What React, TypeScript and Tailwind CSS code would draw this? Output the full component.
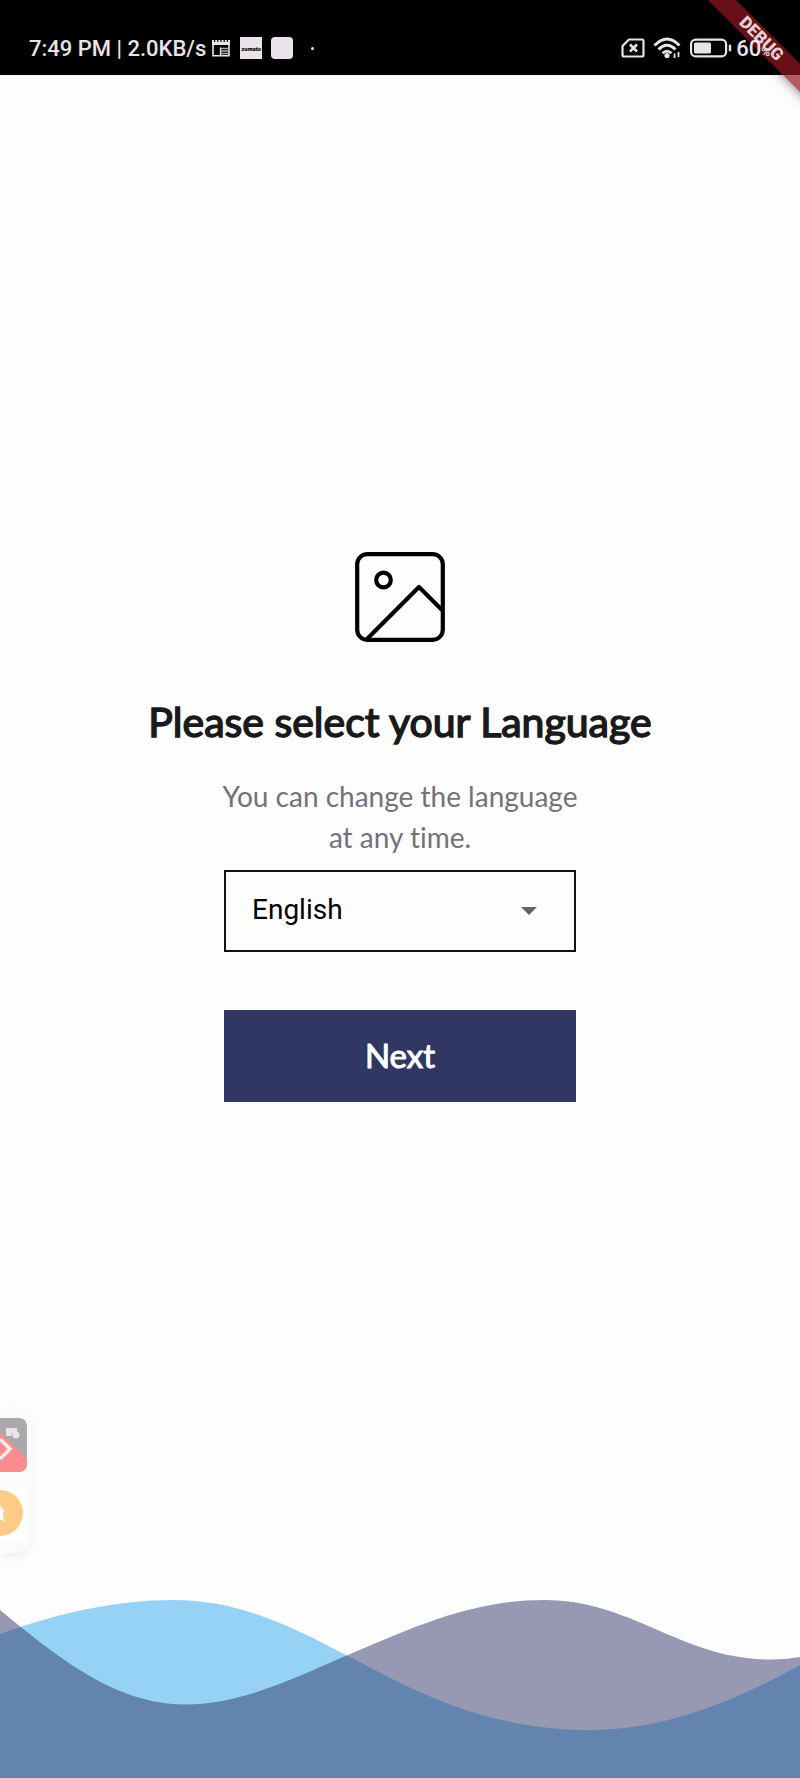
import React, { useState } from "react";

function StatusBar() {
  return (
    <header className="flex h-[75px] items-center justify-between bg-black pt-[21px] pl-[29px] pr-[30px] font-[Roboto,sans-serif] text-[22px] font-medium text-[#e9e3ea]">
      <div className="flex items-center">
        <span className="whitespace-nowrap">7:49 PM | 2.0KB/s</span>
        <svg className="ml-[6px]" width="18" height="17" viewBox="0 0 18 17" fill="none" stroke="currentColor" aria-hidden="true">
          <path d="M1 2V15.800H17V2" strokeWidth="1.6" />
          <path d="M0 1H18" strokeWidth="2" strokeDasharray="2 1.200" />
          <path d="M0 3.500H18" strokeWidth="3" />
          <path d="M8.500 7.500V15.500" strokeWidth="1.3" />
          <path d="M9 8.500H16M9 11H16M9 13.500H16" strokeWidth="1.5" strokeOpacity="0.75" />
        </svg>
        <span className="ml-[10px] flex h-[22px] w-[22px] items-center justify-center bg-[#e9e3ea] text-[6px] font-black italic text-black">zomato</span>
        <span className="ml-[9px] h-[22px] w-[22px] rounded bg-[#e9e3ea]" />
        <span className="ml-[18px] h-[3px] w-[3px] rounded-full bg-[#e9e3ea]" />
      </div>
      <div className="relative z-10 flex items-center">
        <svg width="24" height="20" viewBox="0 0 24 20" fill="none" stroke="currentColor" strokeWidth="2.2" strokeLinejoin="round" aria-hidden="true">
          <path d="M8 1.500H21Q22.500 1.500 22.500 3V17Q22.500 18.500 21 18.500H3Q1.500 18.500 1.500 17V8Z" />
          <path d="M9 6.500L16 13.500M16 6.500L9 13.500" strokeWidth="2.6" />
        </svg>
        <svg className="ml-[8px]" width="28" height="22" viewBox="0 0 28 22" fill="none" stroke="currentColor" strokeWidth="2.8" aria-hidden="true">
          <path d="M1.500 8.500Q14 -4.500 26.500 8.500M5.500 12.500Q14 4 22.500 12.500M9.500 16.200Q14 12 18.500 16.200" />
          <circle cx="14" cy="18.500" r="2.600" fill="currentColor" stroke="none" />
          <path d="M21.500 16.500V21M25.500 15V20" strokeWidth="1.8" />
        </svg>
        <svg className="ml-[9px]" width="42" height="20" viewBox="0 0 42 20" fill="none" aria-hidden="true">
          <rect x="1.100" y="1.600" width="35" height="16.800" rx="4.500" stroke="currentColor" strokeWidth="2.2" />
          <rect x="4" y="4.500" width="17" height="11" rx="1.500" fill="currentColor" />
          <path d="M40 7.800V12.200" stroke="currentColor" strokeWidth="2.4" strokeLinecap="round" />
        </svg>
        <span className="ml-[4px]">60<span className="text-[12px]">%</span></span>
      </div>
    </header>
  );
}

function DebugRibbon() {
  return (
    <div className="pointer-events-none absolute right-0 top-0 h-[110px] w-[110px] overflow-hidden">
      <div className="absolute -right-[61px] top-[29px] flex h-[20px] w-[200px] rotate-45 items-center justify-center bg-[#941520]/70 font-[Roboto,sans-serif] text-[17px] font-black text-[#e2d2d4] shadow-[0_0_12px_rgba(0,0,0,0.5)]">
        DEBUG
      </div>
    </div>
  );
}

function FloatingTools() {
  return (
    <aside className="absolute bottom-[225px] left-0 h-[145px] w-[31px] rounded-r-2xl bg-[#fcfbfc] shadow-[0_4px_8px_rgba(0,0,0,0.06)]">
      <svg width="31" height="145" viewBox="0 0 31 145" fill="none" aria-hidden="true">
        <path d="M0 10H18Q27 10 27 19V55Q27 64 18 64H0Z" fill="#aaa8aa" />
        <path d="M0 24L27 51V55Q27 64 18 64H0Z" fill="#fa8b8f" />
        <path d="M0 31L10 41L0 51" stroke="#f5ecec" strokeWidth="3.500" />
        <path d="M6 20H17V25H12V28H6Z" fill="#e9e6e9" />
        <circle cx="16" cy="27" r="3.500" fill="#e9e6e9" />
        <path d="M0 79H18Q27 79 27 88V123Q27 132 18 132H0Z" fill="#fff" />
        <circle cx="0" cy="105" r="23" fill="#fccb86" />
        <path d="M0 97L2 101H4L3 106L4 114L0 111Z" fill="#fff" />
      </svg>
    </aside>
  );
}

function Waves() {
  return (
    <svg className="absolute bottom-0 left-0 h-[188px] w-full" viewBox="0 0 800 188" preserveAspectRatio="none" aria-hidden="true">
      <path fill="#95d2f6" d="M0 44C60 22 120 10 173 10C240 10 290 36 348 66S480 140 590 140C665 140 733 112 800 75V188H0Z" />
      <path fill="#2f3667" fillOpacity="0.5" d="M0 20C56 66 115 114.500 185 114.500C240 114.500 290 90 348 65C410 39 470 10 545 10C632 10 682 69.500 770 69.500Q786 69.500 800 67V188H0Z" />
    </svg>
  );
}

export default function App() {
  const [language, setLanguage] = useState("English");
  return (
    <div className="relative flex min-h-screen flex-col overflow-hidden bg-[#fefdfe] font-[Lato,sans-serif]">
      <StatusBar />
      <main className="flex flex-1 flex-col items-center pt-[477px] pb-[200px]">
        <svg width="90" height="90" viewBox="0 0 90 90" fill="none" stroke="#000" strokeWidth="4.2" aria-hidden="true">
          <rect x="2.200" y="2.200" width="85.600" height="85.600" rx="10" />
          <circle cx="28.500" cy="28" r="7.300" />
          <path d="M12 87L64 35L87 58" strokeLinejoin="round" />
        </svg>
        <h1 className="mt-[55px] text-center text-[41px] leading-[50px] font-normal text-[#1a191b] [-webkit-text-stroke:1.5px_#1a191b]">Please select your Language</h1>
        <p className="mt-[29px] w-[380px] text-center text-[28px] leading-[41px] text-[#737179] [font-variant-ligatures:none]">You can change the language at any time.</p>
        <form className="mt-[12px] flex w-[352px] flex-col" onSubmit={(e) => e.preventDefault()}>
          <div className="relative">
            <select
              aria-label="Language"
              value={language}
              onChange={(e) => setLanguage(e.target.value)}
              className="h-[82px] w-full appearance-none border-2 border-[#111] bg-transparent pl-[26px] pb-[3px] font-[Roboto,sans-serif] text-[28px] text-black"
            >
              <option>English</option>
            </select>
            <svg className="pointer-events-none absolute right-[39px] top-[37px]" width="16" height="8" viewBox="0 0 16 8" aria-hidden="true">
              <path d="M0 0H16L8 8Z" fill="#666366" />
            </svg>
          </div>
          <button type="submit" className="mt-[58px] h-[92px] bg-[#2f3762] text-[33px] font-normal text-white [-webkit-text-stroke:1px_#fff]">Next</button>
        </form>
      </main>
      <Waves />
      <FloatingTools />
      <DebugRibbon />
    </div>
  );
}
